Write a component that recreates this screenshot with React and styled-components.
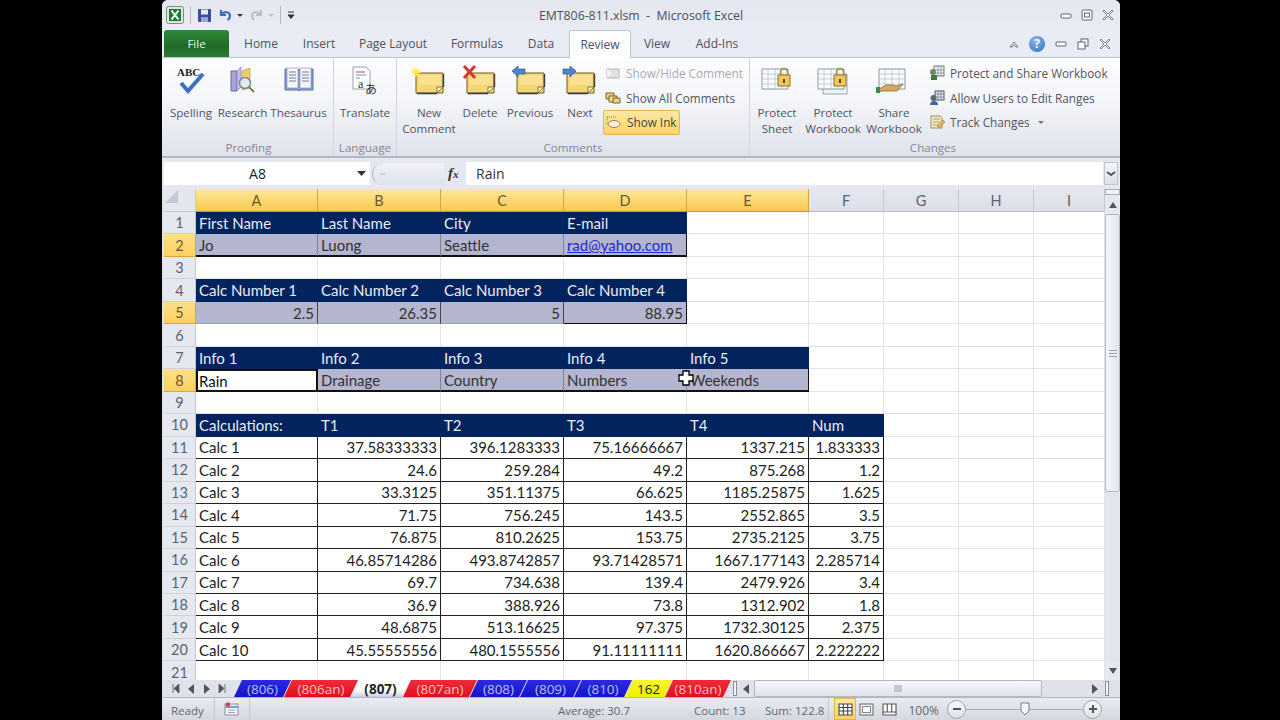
import styled, { createGlobalStyle } from "styled-components";

const GlobalStyle = createGlobalStyle`
  html, body { margin: 0; padding: 0; background: #000; }
  * { box-sizing: border-box; }
`;

const columns = [
  ["A", 122, true], ["B", 123, true], ["C", 123, true], ["D", 123, true], ["E", 122, true],
  ["F", 75, false], ["G", 75, false], ["H", 75, false], ["I", 71, false],
];

const calcRows = [
  ["Calc 1", "37.58333333", "396.1283333", "75.16666667", "1337.215", "1.833333"],
  ["Calc 2", "24.6", "259.284", "49.2", "875.268", "1.2"],
  ["Calc 3", "33.3125", "351.11375", "66.625", "1185.25875", "1.625"],
  ["Calc 4", "71.75", "756.245", "143.5", "2552.865", "3.5"],
  ["Calc 5", "76.875", "810.2625", "153.75", "2735.2125", "3.75"],
  ["Calc 6", "46.85714286", "493.8742857", "93.71428571", "1667.177143", "2.285714"],
  ["Calc 7", "69.7", "734.638", "139.4", "2479.926", "3.4"],
  ["Calc 8", "36.9", "388.926", "73.8", "1312.902", "1.8"],
  ["Calc 9", "48.6875", "513.16625", "97.375", "1732.30125", "2.375"],
  ["Calc 10", "45.55555556", "480.1555556", "91.11111111", "1620.866667", "2.222222"],
];

const head = (items) => items.map((text) => ({ text, kind: "head" }));
const band = (items) => items.map((text) => ({ text, kind: "band" }));

const sheetRows = [
  head(["First Name", "Last Name", "City", "E-mail"]),
  [...band(["Jo", "Luong", "Seattle"]), { text: "rad@yahoo.com", kind: "band", link: true }],
  [],
  head(["Calc Number 1", "Calc Number 2", "Calc Number 3", "Calc Number 4"]),
  ["2.5", "26.35", "5", "88.95"].map((text) => ({ text, kind: "bandNum", right: true })),
  [],
  head(["Info 1", "Info 2", "Info 3", "Info 4", "Info 5"]),
  [{ text: "Rain", kind: "active" }, ...band(["Drainage", "Country", "Numbers", "Weekends"])],
  [],
  head(["Calculations:", "T1", "T2", "T3", "T4", "Num"]),
  ...calcRows.map((r) =>
    r.map((text, i) => ({ text, kind: "calc", right: i > 0 }))
  ),
  [],
];

const sheetTabs = [
  ["(806)", 57, "blue"], ["(806an)", 74, "red"], ["(807)", 59, "active"], ["(807an)", 74, "red"],
  ["(808)", 57, "blue"], ["(809)", 61, "blue"], ["(810)", 58, "blue"], ["162", 47, "yellow"], ["(810an)", 66, "red"],
];

const tabColors = {
  blue: "linear-gradient(#2a2ae0, #1414c8)",
  red: "linear-gradient(#f02a38, #e2101f)",
  yellow: "linear-gradient(#f8f530, #f2ee00)",
  active: "linear-gradient(#ffffff 60%, #c9cbe8)",
};
const tabText = { blue: "#b9bdf5", red: "#f8c0c4", yellow: "#222", active: "#222" };

function Note({ children }) {
  return (
    <svg width="36" height="34" viewBox="0 0 36 34">
      <path d="M5 8h27v20H26l-1 0H5z" fill="#f4d675" stroke="#6d5a25" strokeWidth="1" />
      <path d="M8 10h22v10H8z" fill="#fbe8a4" opacity=".6" />
      <path d="M32 22l-6 6v-6z" fill="#fff6d0" stroke="#6d5a25" strokeWidth=".8" />
      <path d="M6 28.5h20M32.5 9v13" stroke="#3d3d3d" strokeWidth="1.4" />
      {children}
    </svg>
  );
}

function SheetIcon({ children, double }) {
  return (
    <svg width="36" height="32" viewBox="0 0 36 32">
      {double && <path d="M8 9h24v20H8z" fill="#eef1f5" stroke="#8a96a4" strokeWidth=".8" />}
      <path d="M3 4h26v20H3z" fill="#fbfcfe" stroke="#8a96a4" />
      <path d="M3 9h26M3 14h26M3 19h26M9 4v20M16 4v20M23 4v20" stroke="#b6c2cf" strokeWidth=".8" />
      {children}
    </svg>
  );
}

const Lock = () => (
  <g>
    <path d="M21.5 10V7a3.5 3.5 0 017 0v3" fill="none" stroke="#a78a3a" strokeWidth="1.4" />
    <rect x="19" y="10" width="12" height="11" fill="#efc75c" stroke="#8f7326" />
    <rect x="24" y="14" width="2" height="4" fill="#5a4410" />
  </g>
);

const Arrow = ({ right, dir }) => (
  <ArrowGlyph viewBox="0 0 8 10" $size={right ? 10 : 8}>
    <path d={dir === "left" ? "M7 0L1 5l6 5z" : dir === "up" ? "M0 8l4-6 4 6z" : dir === "down" ? "M0 2l4 6 4-6z" : "M1 0l6 5-6 5z"} fill="#555" />
  </ArrowGlyph>
);

function LargeButton({ width, icon, lines }) {
  return (
    <BigBtn $w={width}>
      <BigIcon>{icon}</BigIcon>
      {lines.map((l) => <span key={l}>{l}</span>)}
    </BigBtn>
  );
}

export default function App() {
  return (
    <>
      <GlobalStyle />
      <Page>
        <Window>
          <TitleBar>
            <QuickAccess>
              <svg width="18" height="18" viewBox="0 0 18 18">
                <rect x=".5" y=".5" width="17" height="17" rx="2" fill="#dfe8d8" stroke="#7f8f78" />
                <rect x="3" y="3" width="12" height="12" fill="#1e7a35" />
                <path d="M5.5 4.5l7 9M12.5 4.5l-7 9" stroke="#fff" strokeWidth="2" />
              </svg>
              <QaSep />
              <svg width="15" height="15" viewBox="0 0 15 15">
                <rect x="1" y="1" width="13" height="13" rx="1" fill="#3c4a9c" />
                <rect x="4" y="1.5" width="7" height="5" fill="#e8ecf6" />
                <rect x="4" y="9" width="7" height="5" fill="#9aa4cc" />
              </svg>
              <svg width="15" height="14" viewBox="0 0 15 14">
                <path d="M3 2v5h5M3.5 6.5C6 3 12 3.5 12 8c0 2-1 3-2.5 4" fill="none" stroke="#3a6fb8" strokeWidth="2.2" />
              </svg>
              <TinyCaret />
              <svg width="15" height="14" viewBox="0 0 15 14">
                <path d="M12 2v5H7M11.5 6.5C9 3 3 3.500 3 8c0 2 1 3 2.500 4" fill="none" stroke="#b9bfc9" strokeWidth="2" />
              </svg>
              <TinyCaret $dim />
              <QaSep />
              <svg width="8" height="8" viewBox="0 0 8 8">
                <path d="M1 1h6M1 4h6L4 7.500z" stroke="#333" fill="#333" />
              </svg>
            </QuickAccess>
            <WindowTitle>EMT806-811.xlsm&nbsp; - &nbsp;Microsoft Excel</WindowTitle>
            <WindowControls>
              <svg width="12" height="10" viewBox="0 0 12 10"><rect x="1" y="4" width="10" height="4" rx="1" fill="#fff" stroke="#5d6470" /></svg>
              <svg width="12" height="12" viewBox="0 0 12 12"><rect x="1" y="1" width="10" height="10" rx="1" fill="#fff" stroke="#5d6470" /><rect x="3.500" y="4" width="5" height="4" fill="none" stroke="#5d6470" /></svg>
              <svg width="12" height="12" viewBox="0 0 12 12"><path d="M1 2l4 4-4 4 1 1 4-4 4 4 1-1-4-4 4-4-1-1-4 4-4-4z" fill="#fff" stroke="#5d6470" strokeWidth=".8" /></svg>
            </WindowControls>
          </TitleBar>

          <TabBar>
            <FileTab>File</FileTab>
            <MenuTab $w={64}>Home</MenuTab>
            <MenuTab $w={52}>Insert</MenuTab>
            <MenuTab $w={96}>Page Layout</MenuTab>
            <MenuTab $w={72}>Formulas</MenuTab>
            <MenuTab $w={56}>Data</MenuTab>
            <MenuTab $w={62} $active>Review</MenuTab>
            <MenuTab $w={52}>View</MenuTab>
            <MenuTab $w={68}>Add-Ins</MenuTab>
            <TabTools>
              <svg width="10" height="8" viewBox="0 0 10 8"><path d="M1 7l4-5 4 5H7L5 4.500 3 7z" fill="#fff" stroke="#555" strokeWidth=".8" /></svg>
              <HelpDot>?</HelpDot>
              <svg width="12" height="8" viewBox="0 0 12 8"><rect x="1" y="2" width="10" height="4" rx="1" fill="#fff" stroke="#5d6470" /></svg>
              <svg width="12" height="12" viewBox="0 0 12 12"><rect x="4" y="1" width="7" height="7" fill="#fff" stroke="#5d6470" /><rect x="1" y="4" width="7" height="7" fill="#fff" stroke="#5d6470" /></svg>
              <svg width="12" height="12" viewBox="0 0 12 12"><path d="M1 2l4 4-4 4 1 1 4-4 4 4 1-1-4-4 4-4-1-1-4 4-4-4z" fill="#fff" stroke="#5d6470" strokeWidth=".8" /></svg>
            </TabTools>
          </TabBar>

          <Ribbon>
            <Group $w={170} label="Proofing">
              <GroupBody $pad={2}>
                <LargeButton width={50} lines={["Spelling"]} icon={
                  <svg width="34" height="32" viewBox="0 0 34 32">
                    <text x="3" y="11" fontFamily="Liberation Serif, serif" fontWeight="700" fontSize="11" fill="#222">ABC</text>
                    <path d="M7 18l7 8L29 9" fill="none" stroke="#3a6fc4" strokeWidth="4" />
                  </svg>
                } />
                <LargeButton width={53} lines={["Research"]} icon={
                  <svg width="30" height="32" viewBox="0 0 30 32">
                    <path d="M3 6h6v20H3z" fill="#a9a4d8" stroke="#6b6a9a" />
                    <path d="M9 6l4-4v20l-4 4z" fill="#c2bfe6" stroke="#7c7aa8" strokeWidth=".6" />
                    <path d="M14 6l8-3v20l-8 2z" fill="#efd16a" stroke="#a8903a" strokeWidth=".6" />
                    <circle cx="17" cy="18" r="5.500" fill="#dfe9ef" stroke="#7b8a92" strokeWidth="1.500" />
                    <path d="M21 22l5 5" stroke="#8a7a50" strokeWidth="2" />
                  </svg>
                } />
                <LargeButton width={59} lines={["Thesaurus"]} icon={
                  <svg width="32" height="30" viewBox="0 0 32 30">
                    <path d="M2 4h13l1 2 1-2h13v21H17l-1 1-1-1H2z" fill="#8fa3d6" stroke="#5d6ea3" />
                    <path d="M4 3h11v20H4zM17 3h11v20H17z" fill="#f4f6fa" stroke="#7c88a8" strokeWidth=".6" />
                    <path d="M6 7h7M6 10h7M6 13h7M6 16h7M19 7h7M19 10h7M19 13h7M19 16h7" stroke="#64708c" strokeWidth=".9" />
                  </svg>
                } />
              </GroupBody>
            </Group>
            <Group $w={63} label="Language">
              <GroupBody $center>
                <LargeButton width={60} lines={["Translate"]} icon={
                  <svg width="30" height="32" viewBox="0 0 30 32">
                    <path d="M3 2h13l4 4v18H3z" fill="#fff" stroke="#9aa2ad" />
                    <path d="M6 7h9" stroke="#c0443a" /><path d="M6 10h10M6 13h4" stroke="#6a8fc4" />
                    <text x="8" y="23" fontFamily="Liberation Serif, serif" fontSize="12" fill="#333">a</text>
                    <text x="15" y="29" fontFamily="Noto Sans CJK JP, sans-serif" fontSize="12" fill="#333">あ</text>
                  </svg>
                } />
              </GroupBody>
            </Group>
            <Group $w={353} label="Comments">
              <GroupBody $pad={4}>
                <LargeButton width={56} lines={["New", "Comment"]} icon={
                  <Note><path d="M5 2v10M0 7h10M1.500 3.500l7 7M8.500 3.500l-7 7" stroke="#ffe94a" strokeWidth="1.300" /></Note>
                } />
                <LargeButton width={46} lines={["Delete"]} icon={
                  <Note><path d="M2 1l11 12M13 1L2 13" stroke="#d43b2c" strokeWidth="3" /></Note>
                } />
                <LargeButton width={54} lines={["Previous"]} icon={
                  <Note><path d="M0 6l6-5v3h7v5H6v3z" fill="#4a83cf" stroke="#2e5a96" strokeWidth=".7" /></Note>
                } />
                <LargeButton width={46} lines={["Next"]} icon={
                  <Note><path d="M14 6L8 1v3H1v5h7v3z" fill="#4a83cf" stroke="#2e5a96" strokeWidth=".7" /></Note>
                } />
                <SmallColumn>
                  <SmallBtn $disabled>
                    <svg width="16" height="14" viewBox="0 0 16 14"><path d="M2 3h12v9H2z" fill="#e2e2e2" stroke="#b8b8b8" /><path d="M2 3l5 4-5 5z" fill="#f4f4f4" /></svg>
                    Show/Hide Comment
                  </SmallBtn>
                  <SmallBtn>
                    <svg width="16" height="14" viewBox="0 0 16 14"><path d="M1 2h8v6H1z" fill="#e9cf7c" stroke="#76652c" /><path d="M4 5h8v6H4z" fill="#f2dc8f" stroke="#76652c" /><path d="M8 7h7v5H8z" fill="#e9cf7c" stroke="#76652c" /></svg>
                    Show All Comments
                  </SmallBtn>
                  <SmallBtn $on>
                    <svg width="16" height="14" viewBox="0 0 16 14"><path d="M1 2h10M1 2v8" stroke="#8a7a50" strokeDasharray="1 1" fill="none" /><ellipse cx="8" cy="9" rx="6" ry="3.500" fill="#fbeedd" stroke="#b07a3a" /></svg>
                    Show Ink
                  </SmallBtn>
                </SmallColumn>
              </GroupBody>
            </Group>
            <Group $w={366} label="Changes" $last>
              <GroupBody $pad={1}>
                <LargeButton width={52} lines={["Protect", "Sheet"]} icon={<SheetIcon><Lock /></SheetIcon>} />
                <LargeButton width={60} lines={["Protect", "Workbook"]} icon={<SheetIcon double><Lock /></SheetIcon>} />
                <LargeButton width={62} lines={["Share", "Workbook"]} icon={
                  <SheetIcon>
                    <path d="M1 23h4l5-3h7l3 1 7-2-6 7H6l-5 1z" fill="#d9a860" stroke="#7d5a26" strokeWidth=".7" />
                    <rect x="0" y="22" width="4" height="6" fill="#3f8a4a" />
                  </SheetIcon>
                } />
                <SmallColumn $gap>
                  <SmallBtn>
                    <svg width="16" height="16" viewBox="0 0 16 16"><rect x="5" y="1" width="10" height="10" fill="#eef1f5" stroke="#6d7785" /><path d="M5 5h10M5 8h10M9 1v10M12 1v10" stroke="#6d7785" strokeWidth=".6" /><circle cx="4" cy="7" r="3" fill="#6e8a5a" /><rect x="2" y="10" width="6" height="5" fill="#3f7a4a" /></svg>
                    Protect and Share Workbook
                  </SmallBtn>
                  <SmallBtn>
                    <svg width="16" height="16" viewBox="0 0 16 16"><rect x="6" y="1" width="9" height="9" fill="#eef1f5" stroke="#4c5766" /><path d="M6 4h9M6 7h9M9 1v9M12 1v9" stroke="#4c5766" strokeWidth=".6" /><circle cx="4.500" cy="8" r="3" fill="#5c6a78" /><path d="M1 15c0-3 2-4 4-4s4 1 4 4z" fill="#3f62a8" /></svg>
                    Allow Users to Edit Ranges
                  </SmallBtn>
                  <SmallBtn>
                    <svg width="16" height="16" viewBox="0 0 16 16"><path d="M2 2h9l2 2v10H2z" fill="#f7eecb" stroke="#9c8c54" /><path d="M4 5h7M4 8h7M4 11h5" stroke="#8c7f58" strokeWidth=".8" /><path d="M8 12l6-6 2 2-6 6z" fill="#e6b94a" stroke="#8a6a1c" strokeWidth=".5" /></svg>
                    Track Changes
                    <TinyCaret $gray />
                  </SmallBtn>
                </SmallColumn>
              </GroupBody>
            </Group>
          </Ribbon>

          <FormulaBar>
            <NameBox>
              <NameText>A8</NameText>
              <svg width="9" height="5" viewBox="0 0 9 5"><path d="M0 0h9L4.500 5z" fill="#333" /></svg>
            </NameBox>
            <FxArea>
              <FxPill>
                <svg width="6" height="6" viewBox="0 0 6 6"><path d="M0 3h6" stroke="#c4c8d2" strokeWidth="1.500" /></svg>
              </FxPill>
              <FxLabel>f<small>x</small></FxLabel>
            </FxArea>
            <FormulaInput>Rain</FormulaInput>
            <ExpandBtn>
              <svg width="10" height="6" viewBox="0 0 10 6"><path d="M1 1l4 3 4-3" fill="none" stroke="#555" strokeWidth="2" /></svg>
            </ExpandBtn>
          </FormulaBar>

          <SheetArea>
            <Grid>
              <Corner>
                <svg width="15" height="15" viewBox="0 0 15 15"><path d="M14 1v13H1z" fill="#c4c8d2" /></svg>
              </Corner>
              {columns.map(([name, , selected]) => (
                <ColHead key={name} $selected={selected}>{name}</ColHead>
              ))}
              {sheetRows.map((row, r) => (
                <Row key={r} index={r} cells={row} />
              ))}
              <Crosshair>
                <svg width="16" height="16" viewBox="0 0 16 16">
                  <path d="M5 1h6v4h4v6h-4v4H5v-4H1V5h4z" fill="#fff" stroke="#000" strokeWidth="1.300" />
                </svg>
              </Crosshair>
            </Grid>
            <VScroll>
              <SplitBox />
              <ScrollBtn><Arrow dir="up" /></ScrollBtn>
              <VThumb><Grip /></VThumb>
              <VTrack />
              <ScrollBtn><Arrow dir="down" /></ScrollBtn>
            </VScroll>
          </SheetArea>

          <TabRow>
            <TabNav>
              <svg width="8" height="9" viewBox="0 0 8 9"><path d="M1 0v9M7 0L2 4.500 7 9z" stroke="#555" fill="#555" strokeWidth=".8" /></svg>
              <Arrow dir="left" />
              <Arrow dir="right" />
              <svg width="8" height="9" viewBox="0 0 8 9"><path d="M7 0v9M1 0l5 4.500L1 9z" stroke="#555" fill="#555" strokeWidth=".8" /></svg>
            </TabNav>
            <Tabs>
              {sheetTabs.map(([label, w, kind]) => (
                <SheetTab key={label} $w={w} $kind={kind}>{label}</SheetTab>
              ))}
            </Tabs>
            <TabSplit />
            <HScroll>
              <Arrow dir="left" right />
              <HThumb>
                <svg width="8" height="7" viewBox="0 0 8 7"><path d="M1 0v7M3 0v7M5 0v7M7 0v7" stroke="#9aa0ac" /></svg>
              </HThumb>
              <Arrow dir="right" right />
              <TabSplit />
            </HScroll>
          </TabRow>

          <StatusBar>
            <ReadyText>Ready</ReadyText>
            <MacroBox>
              <svg width="16" height="14" viewBox="0 0 16 14">
                <rect x="1" y="2" width="13" height="11" fill="#f3f4f8" stroke="#8a92a0" />
                <path d="M1 5h13" stroke="#7f9cc8" strokeWidth="2" />
                <circle cx="4" cy="2.500" r="2.200" fill="#d8433a" />
                <path d="M4 8h7M4 10.500h7" stroke="#9aa3b2" />
              </svg>
            </MacroBox>
            <StatusSpacer />
            <StatusItem $w={136}>Average: 30.7</StatusItem>
            <StatusItem $w={71}>Count: 13</StatusItem>
            <StatusItem $w={64} $sep>Sum: 122.8</StatusItem>
            <ViewBtn $on $w={22}>
              <svg width="15" height="13" viewBox="0 0 15 13"><path d="M1 1h13v11H1zM1 4.500h13M1 8h13M5.300 1v11M9.700 1v11" fill="#fff" stroke="#444" strokeWidth="1.100" /></svg>
            </ViewBtn>
            <ViewBtn $w={21}>
              <svg width="15" height="13" viewBox="0 0 15 13"><rect x="1" y="1" width="13" height="11" fill="#eef0f5" stroke="#666" /><rect x="3.500" y="3.500" width="8" height="6" fill="#fff" stroke="#888" /></svg>
            </ViewBtn>
            <ViewBtn $w={24}>
              <svg width="15" height="13" viewBox="0 0 15 13"><path d="M1 1h13v11H1zM5.300 1v8M9.700 1v8M1 9h13" fill="#fff" stroke="#555" strokeWidth="1.100" /></svg>
            </ViewBtn>
            <ZoomText>100%</ZoomText>
            <ZoomBtn>
              <svg width="10" height="10" viewBox="0 0 10 10"><path d="M1 5h8" stroke="#555" strokeWidth="2" /></svg>
            </ZoomBtn>
            <Slider>
              <SliderThumb>
                <svg width="10" height="14" viewBox="0 0 10 14"><path d="M1 1h8v8l-4 4-4-4z" fill="#f6f7fa" stroke="#777e8c" /></svg>
              </SliderThumb>
            </Slider>
            <ZoomBtn>
              <svg width="10" height="10" viewBox="0 0 10 10"><path d="M1 5h8M5 1v8" stroke="#555" strokeWidth="2" /></svg>
            </ZoomBtn>
          </StatusBar>
        </Window>
      </Page>
    </>
  );
}

function Group({ label, children, $w, $last }) {
  return (
    <GroupBox $w={$w} $last={$last}>
      {children}
      <GroupLabel>{label}</GroupLabel>
    </GroupBox>
  );
}

function Row({ index, cells }) {
  const n = index + 1;
  const selected = n === 2 || n === 5 || n === 8;
  return (
    <>
      <RowHead $selected={selected}>{n}</RowHead>
      {columns.map(([name], i) => {
        const c = cells[i];
        return (
          <Cell key={name} $kind={c ? c.kind : "plain"} $right={c && c.right} $link={c && c.link} $lastBand={c && i === cells.length - 1}>
            {c ? c.text : ""}
          </Cell>
        );
      })}
    </>
  );
}

const Page = styled.div`
  width: 1280px;
  height: 720px;
  background: #000;
  padding-left: 162px;
  overflow: hidden;
`;

const Window = styled.div`
  width: 958px;
  height: 720px;
  display: flex;
  flex-direction: column;
  background: #e8ebf3;
  border-radius: 6px 6px 0 0;
  overflow: hidden;
  font-family: "Open Sans", "Liberation Sans", sans-serif;
`;

const TitleBar = styled.div`
  height: 30px;
  flex: none;
  display: grid;
  grid-template-columns: 1fr auto 1fr;
  align-items: center;
  background: linear-gradient(#e4e7f0, #e9ecf4);
  padding: 0 4px 0 4px;
`;

const QuickAccess = styled.div`
  display: flex;
  align-items: center;
  gap: 6px;
`;

const QaSep = styled.div`
  width: 1px;
  height: 18px;
  background: #b5b9c4;
`;

const TinyCaret = styled.span`
  width: 0;
  height: 0;
  border-left: 3px solid transparent;
  border-right: 3px solid transparent;
  border-top: 3px solid ${(p) => (p.$dim ? "#b9bfc9" : p.$gray ? "#777" : "#333")};
  margin-left: ${(p) => (p.$gray ? "3px" : "-2px")};
`;

const WindowTitle = styled.div`
  font-size: 12.3px;
  color: #4a4f5a;
  white-space: nowrap;
`;

const WindowControls = styled.div`
  display: flex;
  justify-content: flex-end;
  align-items: center;
  gap: 9px;
  padding-right: 2px;
`;

const TabBar = styled.div`
  height: 28px;
  flex: none;
  display: flex;
  align-items: flex-end;
  padding-left: 2px;
  background: #e9ecf4;
  border-bottom: 1px solid #c0c4cd;
  position: relative;
`;

const FileTab = styled.div`
  width: 65px;
  height: 27px;
  margin-right: 0;
  background: linear-gradient(#2f8a3a, #1f6a28 60%, #2a7a33);
  color: #e8f5e8;
  font-size: 11.5px;
  border-radius: 3px 3px 0 0;
  display: flex;
  align-items: center;
  justify-content: center;
`;

const MenuTab = styled.div`
  width: ${(p) => p.$w}px;
  height: ${(p) => (p.$active ? "28px" : "27px")};
  margin-bottom: ${(p) => (p.$active ? "-1px" : "0")};
  font-size: 12px;
  color: #4d525c;
  display: flex;
  align-items: center;
  justify-content: center;
  white-space: nowrap;
  ${(p) =>
    p.$active &&
    `background: linear-gradient(#fff, #fdfdfe);
     border: 1px solid #c0c4cd;
     border-bottom: none;
     border-radius: 3px 3px 0 0;`}
`;

const TabTools = styled.div`
  margin-left: auto;
  height: 27px;
  display: flex;
  align-items: center;
  gap: 10px;
  padding-right: 9px;
`;

const HelpDot = styled.div`
  width: 16px;
  height: 16px;
  border-radius: 50%;
  background: radial-gradient(circle at 40% 30%, #8db6ea, #2f6dbf);
  color: #fff;
  font-size: 12px;
  font-weight: 700;
  display: flex;
  align-items: center;
  justify-content: center;
`;

const Ribbon = styled.div`
  height: 100px;
  flex: none;
  display: flex;
  padding-left: 2px;
  background: linear-gradient(#fdfdfe, #f4f5f9 45%, #dfe2ec);
  border-bottom: 2px solid #b4b7bf;
`;

const GroupBox = styled.div`
  width: ${(p) => p.$w}px;
  flex: none;
  display: flex;
  flex-direction: column;
  border-right: ${(p) => (p.$last ? "none" : "1px solid #d2d5de")};
`;

const GroupBody = styled.div`
  flex: 1;
  display: flex;
  padding-left: ${(p) => p.$pad || 0}px;
  justify-content: ${(p) => (p.$center ? "center" : "flex-start")};
  min-height: 0;
`;

const GroupLabel = styled.div`
  height: 16px;
  font-size: 11.6px;
  line-height: 16px;
  text-align: center;
  color: #848892;
`;

const BigBtn = styled.div`
  width: ${(p) => p.$w}px;
  flex: none;
  display: flex;
  flex-direction: column;
  align-items: center;
  font-size: 11.6px;
  line-height: 16px;
  color: #50555f;
  white-space: nowrap;
  padding-top: 7px;
`;

const BigIcon = styled.div`
  height: 40px;
  display: flex;
  align-items: flex-start;
  justify-content: center;
  margin-bottom: 0;
`;

const SmallColumn = styled.div`
  display: flex;
  flex-direction: column;
  margin-left: ${(p) => (p.$gap ? "2px" : "0")};
  padding-top: 3px;
  gap: 0;
`;

const SmallBtn = styled.div`
  height: 24.5px;
  display: flex;
  align-items: center;
  gap: 5px;
  font-size: 11.75px;
  padding: 0 2px;
  width: fit-content;
  white-space: nowrap;
  color: ${(p) => (p.$disabled ? "#a8abb3" : "#50555f")};
  ${(p) =>
    p.$on &&
    `background: linear-gradient(#fde7a4, #fbd568);
     border: 1px solid #e0b84e;
     border-radius: 2px;
     color: #444;`}
`;

const FormulaBar = styled.div`
  height: 31px;
  flex: none;
  display: flex;
  align-items: stretch;
  padding: 4px 2px 4px 2px;
  background: #e5e8f0;
`;

const NameBox = styled.div`
  width: 206px;
  background: #fff;
  display: flex;
  align-items: center;
  padding-right: 4px;
  font-size: 14px;
  color: #222;
`;

const NameText = styled.span`
  flex: 1;
  text-align: center;
  padding-right: 6px;
`;

const FxArea = styled.div`
  width: 96px;
  display: flex;
  align-items: center;
  padding-left: 2px;
`;

const FxPill = styled.div`
  width: 72px;
  height: 22px;
  border-radius: 11px 0 0 11px;
  background: linear-gradient(#f0f2f6, #dfe2ea);
  border-left: 1px solid #b8bcc6;
  padding-left: 7px;
  display: flex;
  align-items: center;
`;

const FxLabel = styled.div`
  font-family: "Liberation Serif", serif;
  font-style: italic;
  font-weight: 700;
  font-size: 15px;
  color: #333;
  margin-left: 4px;
  small {
    font-size: 11px;
  }
`;

const FormulaInput = styled.div`
  flex: 1;
  background: #fff;
  display: flex;
  align-items: center;
  padding-left: 10px;
  font-size: 14px;
  color: #333;
`;

const ExpandBtn = styled.div`
  width: 14px;
  margin-left: 1px;
  background: linear-gradient(#f4f5f9, #dde0e8);
  border: 1px solid #c0c4cd;
  display: flex;
  align-items: center;
  justify-content: center;
`;

const SheetArea = styled.div`
  height: 491px;
  flex: none;
  display: flex;
  padding-left: 2px;
  background: #dfe2ea;
  overflow: hidden;
`;

const Grid = styled.div`
  width: 941px;
  flex: none;
  position: relative;
  display: grid;
  grid-template-columns: 32px ${columns.map((c) => `${c[1]}px`).join(" ")};
  grid-template-rows: 23px repeat(21, 22.47px);
  background: #fff;
  font-family: Lato, "Open Sans", sans-serif;
  font-size: 15px;
  overflow: hidden;
`;

const Corner = styled.div`
  background: #e4e6ee;
  border-right: 1px solid #c8cbd4;
  border-bottom: 1px solid #c8cbd4;
`;

const ColHead = styled.div`
  display: flex;
  align-items: center;
  justify-content: center;
  font-size: 14.5px;
  color: ${(p) => (p.$selected ? "#6a5a30" : "#5d6270")};
  background: ${(p) => (p.$selected ? "linear-gradient(#fde99a, #f9c74f)" : "linear-gradient(#e6e8f0, #dcdfe9)")};
  border-right: 1px solid ${(p) => (p.$selected ? "#d4a642" : "#c4c7d2")};
  border-bottom: 1px solid ${(p) => (p.$selected ? "#c9962e" : "#b8bbc6")};
`;

const RowHead = styled.div`
  display: flex;
  align-items: center;
  justify-content: center;
  font-size: 14.5px;
  color: ${(p) => (p.$selected ? "#6a5a30" : "#5d6270")};
  background: ${(p) => (p.$selected ? "linear-gradient(#fde08a, #fbd05e)" : "#e6e8f0")};
  border-right: 1px solid ${(p) => (p.$selected ? "#d4a642" : "#c4c7d2")};
  border-bottom: 1px solid ${(p) => (p.$selected ? "#d4a642" : "#cfd2db")};
`;

const cellStyles = {
  plain: "background:#fff;border-right:1px solid #e2e3e6;border-bottom:1px solid #e2e3e6;padding:0 3px;",
  head: "background:#03235f;color:#e8ecf4;border-right:1px solid #03235f;border-bottom:1px solid #03235f;padding:0 3px;",
  band: "background:#b3b6ce;color:#333;border-right:1px solid #7f8296;border-bottom:2px solid #111;padding:0 3px;",
  bandNum: "background:#b3b6ce;color:#333;border-right:1px solid #444;border-bottom:1px solid #9a9db2;padding:0 3px;",
  active: "background:#fff;color:#111;border:2px solid #111;padding:0 1px;",
  calc: "background:#fff;color:#222;border-right:1px solid #222;border-bottom:1px solid #222;padding:0 3px;",
};

const Cell = styled.div`
  ${(p) => cellStyles[p.$kind]}
  display: flex;
  align-items: center;
  justify-content: ${(p) => (p.$right ? "flex-end" : "flex-start")};
  white-space: nowrap;
  overflow: hidden;
  ${(p) => p.$link && "color:#1f2ad0;text-decoration:underline;"}
  ${(p) => p.$lastBand && p.$kind !== "head" && p.$kind !== "active" && "border-right:1px solid #111;"}
  ${(p) => p.$lastBand && p.$kind === "bandNum" && "border-bottom:1px solid #111;"}
`;

const Crosshair = styled.div`
  position: absolute;
  left: 514px;
  top: 181px;
  width: 16px;
  height: 16px;
`;

const VScroll = styled.div`
  width: 15px;
  flex: none;
  display: flex;
  flex-direction: column;
  background: #e6e8f0;
`;

const SplitBox = styled.div`
  height: 6px;
  flex: none;
  background: #f2f3f7;
  border: 1px solid #a9adb8;
`;

const ScrollBtn = styled.div`
  height: 19px;
  flex: none;
  display: flex;
  align-items: center;
  justify-content: center;
`;

const ArrowGlyph = styled.svg`
  width: ${(p) => p.$size}px;
  height: 10px;
  flex: none;
`;

const VThumb = styled.div`
  height: 278px;
  flex: none;
  background: linear-gradient(90deg, #f6f7fa, #e4e6ee);
  border: 1px solid #b4b8c4;
  border-radius: 2px;
  display: flex;
  align-items: center;
  justify-content: center;
`;

const Grip = styled.div`
  width: 8px;
  height: 7px;
  border-top: 1px solid #9aa0ac;
  border-bottom: 1px solid #9aa0ac;
  background: linear-gradient(#9aa0ac, #9aa0ac) center / 100% 1px no-repeat;
`;

const VTrack = styled.div`
  flex: 1;
  background: #e3e5ec;
`;

const TabRow = styled.div`
  height: 18px;
  flex: none;
  display: flex;
  align-items: stretch;
  padding-left: 2px;
  background: #dfe2ea;
  border-bottom: 1px solid #b4b8c4;
  position: relative;
`;

const TabNav = styled.div`
  width: 70px;
  flex: none;
  display: flex;
  align-items: center;
  justify-content: space-around;
  padding: 0 4px;
`;

const Tabs = styled.div`
  width: 497px;
  flex: none;
  display: flex;
  overflow: hidden;
`;

const SheetTab = styled.div`
  width: ${(p) => p.$w}px;
  flex: none;
  margin-right: -7px;
  clip-path: polygon(8px 0, 100% 0, calc(100% - 8px) 100%, 0 100%);
  background: ${(p) => tabColors[p.$kind]};
  color: ${(p) => tabText[p.$kind]};
  font-size: 13.5px;
  font-weight: ${(p) => (p.$kind === "active" ? 700 : 400)};
  display: flex;
  align-items: center;
  justify-content: center;
  white-space: nowrap;
`;

const TabSplit = styled.div`
  width: 4px;
  flex: none;
  margin: 1px 2px;
  background: #f4f5f8;
  border: 1px solid #8a8e98;
`;

const HScroll = styled.div`
  flex: 1;
  display: flex;
  align-items: stretch;
  padding: 0 9px 0 2px;
  gap: 3px;

  & > svg {
    align-self: center;
  }
`;

const HThumb = styled.div`
  flex: 1;
  margin: 0 45px 0 0;
  background: linear-gradient(#f6f7fa, #dfe2ea);
  border: 1px solid #b4b8c4;
  border-radius: 2px;
  display: flex;
  align-items: center;
  justify-content: center;
`;

const StatusBar = styled.div`
  flex: 1;
  display: flex;
  align-items: center;
  background: linear-gradient(#e9ebf1, #d4d7df);
  font-size: 11.5px;
  color: #62666f;
  padding-right: 18px;
`;

const ReadyText = styled.div`
  width: 52px;
  padding: 3px 0 0 9px;
`;

const MacroBox = styled.div`
  width: 36px;
  height: 100%;
  display: flex;
  align-items: center;
  justify-content: center;
  border-left: 1px solid #c4c7d0;
  border-right: 1px solid #c4c7d0;
`;

const StatusSpacer = styled.div`
  flex: 1;
`;

const StatusItem = styled.div`
  width: ${(p) => p.$w}px;
  white-space: nowrap;
  height: 100%;
  padding-top: 3px;
  display: flex;
  align-items: center;
  ${(p) => p.$sep && "border-right:1px solid #c4c7d0;"}
`;

const ViewBtn = styled.div`
  width: ${(p) => p.$w}px;
  height: 100%;
  display: flex;
  align-items: center;
  justify-content: center;
  ${(p) =>
    p.$on &&
    `margin-left: 5px;
     background: linear-gradient(#fde9a8, #fbd160);
     border: 1px solid #e0b84e;`}
`;

const ZoomText = styled.div`
  width: 46px;
  text-align: right;
  padding: 3px 8px 0 0;
  font-size: 12px;
`;

const ZoomBtn = styled.div`
  width: 19px;
  height: 19px;
  flex: none;
  border-radius: 50%;
  border: 1px solid #9ea3ae;
  background: linear-gradient(#fafbfd, #dcdfe7);
  display: flex;
  align-items: center;
  justify-content: center;
`;

const Slider = styled.div`
  width: 117px;
  height: 1px;
  background: #a9adb8;
  display: flex;
  justify-content: center;
`;

const SliderThumb = styled.div`
  height: 14px;
  margin-top: -7px;
  margin-left: 0;
`;
